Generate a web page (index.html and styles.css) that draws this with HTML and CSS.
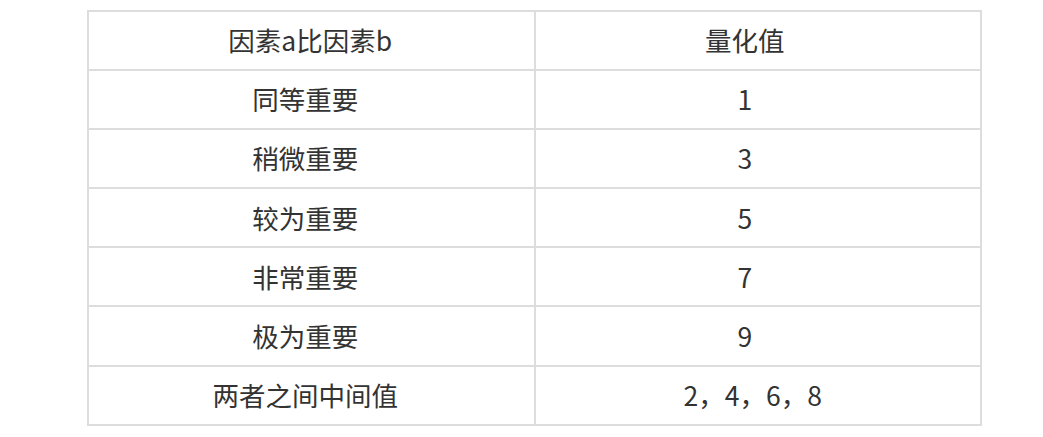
FILE: index.html
```html
<!DOCTYPE html>
<html lang="zh-CN">
<head>
<meta charset="utf-8">
<link rel="stylesheet" href="styles.css">
</head>
<body>
<table class="scale">
  <tr class="head"><td>因素a比因素b</td><td>量化值</td></tr>
  <tr><td>同等重要</td><td>1</td></tr>
  <tr><td>稍微重要</td><td>3</td></tr>
  <tr><td>较为重要</td><td>5</td></tr>
  <tr><td>非常重要</td><td>7</td></tr>
  <tr><td>极为重要</td><td>9</td></tr>
  <tr class="last"><td>两者之间中间值</td><td>2，4，6，8</td></tr>
</table>
</body>
</html>
```
FILE: styles.css
```css
html, body {
  margin: 0;
  padding: 0;
  background: #fff;
}
body {
  padding: 10px 0 0 87px;
  font-family: "Noto Sans CJK SC", "Noto Sans", sans-serif;
  color: #333;
}
.scale {
  border-collapse: collapse;
  width: 895px;
  table-layout: fixed;
}
.scale td {
  border: 2px solid #ddd;
  height: 57.1px;
  padding: 0 12px 0 0;
  text-align: center;
  vertical-align: middle;
  font-size: 26.5px;
  line-height: 1;
}
.scale td + td {
  padding-right: 26px;
}
.scale .head td {
  padding-right: 2px;
}
.scale .head td + td {
  padding-right: 26px;
}
.scale .last td + td {
  padding-right: 10px;
}
```
